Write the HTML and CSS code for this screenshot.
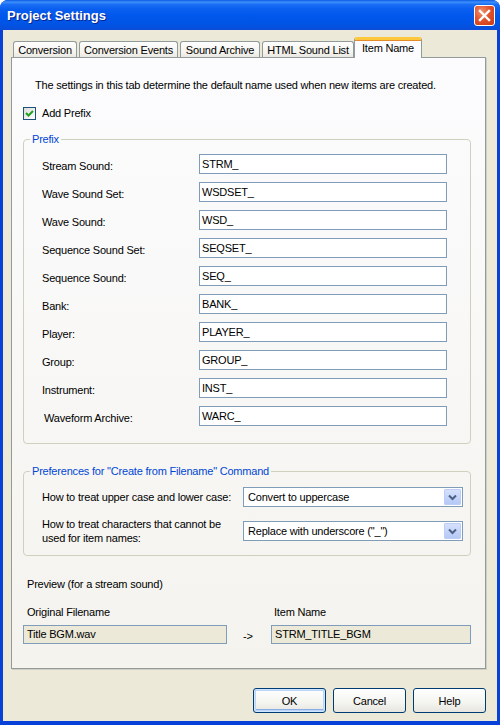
FILE: index.html
```html
<!DOCTYPE html>
<html>
<head>
<meta charset="utf-8">
<link rel="stylesheet" href="styles.css">
</head>
<body>
<div class="window">
  <div class="titlebar">
    <span class="title">Project Settings</span>
    <span class="close"><svg width="13" height="13" viewBox="0 0 13 13"><path d="M2 2 L11 11 M11 2 L2 11" stroke="#fff" stroke-width="2.4" stroke-linecap="square"/></svg></span>
  </div>
  <div class="client">
    <div class="tabs">
      <div class="tab w1">Conversion</div>
      <div class="tab w2">Conversion Events</div>
      <div class="tab w3">Sound Archive</div>
      <div class="tab w4">HTML Sound List</div>
      <div class="tab sel">Item Name</div>
    </div>
    <div class="panel">
      <p class="intro">The settings in this tab determine the default name used when new items are created.</p>
      <div class="check"><span class="box"><svg width="11" height="11" viewBox="0 0 11 11"><path d="M2 5 L4.5 7.5 L9 3" fill="none" stroke="#21a121" stroke-width="2"/></svg></span>Add Prefix</div>
      <fieldset class="group prefix">
        <legend>Prefix</legend>
        <div class="rows">
          <div class="row"><span class="lbl">Stream Sound:</span><span class="field">STRM_</span></div>
          <div class="row"><span class="lbl">Wave Sound Set:</span><span class="field">WSDSET_</span></div>
          <div class="row"><span class="lbl">Wave Sound:</span><span class="field">WSD_</span></div>
          <div class="row"><span class="lbl">Sequence Sound Set:</span><span class="field">SEQSET_</span></div>
          <div class="row"><span class="lbl">Sequence Sound:</span><span class="field">SEQ_</span></div>
          <div class="row"><span class="lbl">Bank:</span><span class="field">BANK_</span></div>
          <div class="row"><span class="lbl">Player:</span><span class="field">PLAYER_</span></div>
          <div class="row"><span class="lbl">Group:</span><span class="field">GROUP_</span></div>
          <div class="row"><span class="lbl">Instrument:</span><span class="field">INST_</span></div>
          <div class="row"><span class="lbl shift">Waveform Archive:</span><span class="field">WARC_</span></div>
        </div>
      </fieldset>
      <fieldset class="group prefs">
        <legend>Preferences for "Create from Filename" Command</legend>
        <div class="prows">
          <div class="prow"><span class="plbl">How to treat upper case and lower case:</span><div class="combo"><span class="ctext">Convert to uppercase</span><span class="cbtn"><svg width="9" height="7" viewBox="0 0 9 7"><path d="M1 1.5 L4.5 5 L8 1.5" fill="none" stroke="#4d6185" stroke-width="2"/></svg></span></div></div>
          <div class="prow"><span class="plbl">How to treat characters that cannot be<br>used for item names:</span><div class="combo"><span class="ctext">Replace with underscore ("_")</span><span class="cbtn"><svg width="9" height="7" viewBox="0 0 9 7"><path d="M1 1.5 L4.5 5 L8 1.5" fill="none" stroke="#4d6185" stroke-width="2"/></svg></span></div></div>
        </div>
      </fieldset>
      <div class="ptitle">Preview (for a stream sound)</div>
      <div class="preview">
        <div class="pcol c1"><div class="plabel">Original Filename</div><div class="ro">Title BGM.wav</div></div>
        <div class="arrow">-&gt;</div>
        <div class="pcol c2"><div class="plabel">Item Name</div><div class="ro">STRM_TITLE_BGM</div></div>
      </div>
    </div>
    <div class="buttons">
      <span class="btn def">OK</span>
      <span class="btn">Cancel</span>
      <span class="btn">Help</span>
    </div>
  </div>
</div>
</body>
</html>
```
FILE: styles.css
```css
* { box-sizing: border-box; }
html, body { margin: 0; padding: 0; }
body {
  font-family: "Liberation Sans", Arial, sans-serif;
  font-size: 11px;
  letter-spacing: -0.2px;
  color: #000;
  background: #fff;
}
.window {
  width: 500px;
  height: 725px;
  background: #0841d8;
  border-radius: 8px 8px 0 0;
  display: flex;
  flex-direction: column;
}
.titlebar {
  height: 30px;
  flex: none;
  display: flex;
  align-items: center;
  justify-content: space-between;
  padding: 0 5px 0 7px;
  border-radius: 8px 8px 0 0;
  background: linear-gradient(to bottom, #0a5ae6 0%, #3d8ff9 7%, #1a6ef5 15%, #0a5ff0 30%, #0057eb 55%, #0054e5 80%, #0a4cd8 100%);
}
.title {
  color: #fff;
  font-weight: bold;
  font-size: 13px;
  text-shadow: 1px 1px 0 #0a248c;
  letter-spacing: 0;
}
.close {
  width: 21px;
  height: 21px;
  margin-top: 1px;
  border: 1px solid #fff;
  border-radius: 3px;
  background: radial-gradient(circle at 35% 30%, #f0926e 0%, #e2532d 45%, #c83a14 100%);
  display: flex;
  align-items: center;
  justify-content: center;
}
.client {
  flex: 1;
  margin: 0 3px 4px 3px;
  background: #ece9d8;
  display: flex;
  flex-direction: column;
}
.tabs {
  height: 27px;
  flex: none;
  display: flex;
  align-items: flex-end;
  gap: 2px;
  padding-left: 10px;
}
.tab {
  height: 16px;
  border: 1px solid #919b9c;
  border-bottom: none;
  border-radius: 3px 3px 0 0;
  background: linear-gradient(to bottom, #fefefe, #f4f3ee 70%, #e8e7e0);
  display: flex;
  align-items: center;
  justify-content: center;
  padding-top: 1px;
  white-space: nowrap;
}
.w1 { width: 64px; }
.w2 { width: 99px; }
.w3 { width: 80px; }
.w4 { width: 92px; }
.tab.sel {
  width: 68px;
  height: 21px;
  margin-left: -2px;
  margin-bottom: -1px;
  position: relative;
  z-index: 1;
  background: #fcfcfe;
  border-top: 3px solid #ffc83c;
  box-shadow: inset 0 1px 0 #e68b2c;
  padding-top: 0;
  padding-bottom: 3px;
  border-radius: 3px 3px 0 0;
}
.panel {
  flex: none;
  height: 612px;
  margin: 0 11px 0 8px;
  border: 1px solid #919b9c;
  background: linear-gradient(to bottom, #fcfcfe, #f4f3ee);
  box-shadow: 1px 1px 0 #d0cfc4;
  display: flex;
  flex-direction: column;
}
.intro {
  margin: 21px 0 0 23px;
  line-height: 13px;
}
.check {
  display: flex;
  align-items: center;
  margin: 15px 0 0 11px;
  height: 13px;
  line-height: 13px;
}
.box {
  width: 13px;
  height: 13px;
  border: 1px solid #1c5180;
  background: linear-gradient(135deg, #dcdcd7, #fff);
  display: flex;
  align-items: center;
  justify-content: center;
  margin-right: 6px;
}
.group {
  margin: 0 0 0 11px;
  padding: 0;
  width: 448px;
  border: 1px solid #d0d0bf;
  border-radius: 4px;
  min-inline-size: 0;
}
.group legend {
  margin-left: 6px;
  padding: 0 2px;
  color: #0046d5;
  line-height: 13px;
}
.prefix { margin-top: 13px; }
.rows {
  display: flex;
  flex-direction: column;
  gap: 8px;
  padding: 8px 0 17px 18px;
}
.row {
  display: flex;
  align-items: center;
  height: 20px;
}
.lbl {
  width: 157px;
  flex: none;
  padding-top: 3px;
}
.lbl.shift { padding-left: 2px; }
.field {
  width: 248px;
  height: 20px;
  border: 1px solid #7f9db9;
  background: #fff;
  padding-left: 2px;
  line-height: 18px;
}
.prefs { margin-top: 21px; }
.prows {
  display: flex;
  flex-direction: column;
  gap: 10px;
  padding: 9px 0 10px 18px;
}
.prow {
  display: flex;
  align-items: center;
  min-height: 20px;
}
.plbl {
  width: 201px;
  flex: none;
  line-height: 14px;
}
.combo {
  width: 220px;
  height: 20px;
  border: 1px solid #7f9db9;
  background: #fff;
  display: flex;
  align-items: center;
  justify-content: space-between;
  padding: 0 1px 0 4px;
}
.cbtn {
  width: 17px;
  height: 16px;
  border: 1px solid #bccef7;
  border-radius: 1px;
  background: linear-gradient(to bottom, #d5e0fb, #b5c9f6);
  display: flex;
  align-items: center;
  justify-content: center;
}
.ptitle {
  margin: 22px 0 0 15px;
  line-height: 13px;
}
.preview {
  display: flex;
  margin: 15px 0 0 11px;
}
.pcol { display: flex; flex-direction: column; }
.c1 { width: 204px; }
.c2 { width: 200px; }
.plabel { line-height: 13px; margin-bottom: 6px; padding-left: 4px; }
.c2 .plabel { padding-left: 3px; }
.ro {
  height: 19px;
  border: 1px solid #7f9db9;
  background: #ece9d8;
  padding-left: 3px;
  line-height: 17px;
}
.arrow {
  width: 44px;
  align-self: flex-end;
  padding-left: 16px;
  line-height: 13px;
  margin-bottom: 1px;
}
.buttons {
  display: flex;
  justify-content: flex-end;
  gap: 7px;
  margin: 19px 11px 0 0;
}
.btn {
  width: 73px;
  height: 25px;
  border: 1px solid #003c74;
  border-radius: 3px;
  background: linear-gradient(to bottom, #ffffff, #f4f4f0 60%, #e6e5de);
  display: flex;
  align-items: center;
  justify-content: center;
}
.btn.def {
  box-shadow: inset 0 0 0 1px #cee7ff, inset 0 0 0 2px #bcd4f6, inset 0 -2px 0 1px #89ade4;
}
```
